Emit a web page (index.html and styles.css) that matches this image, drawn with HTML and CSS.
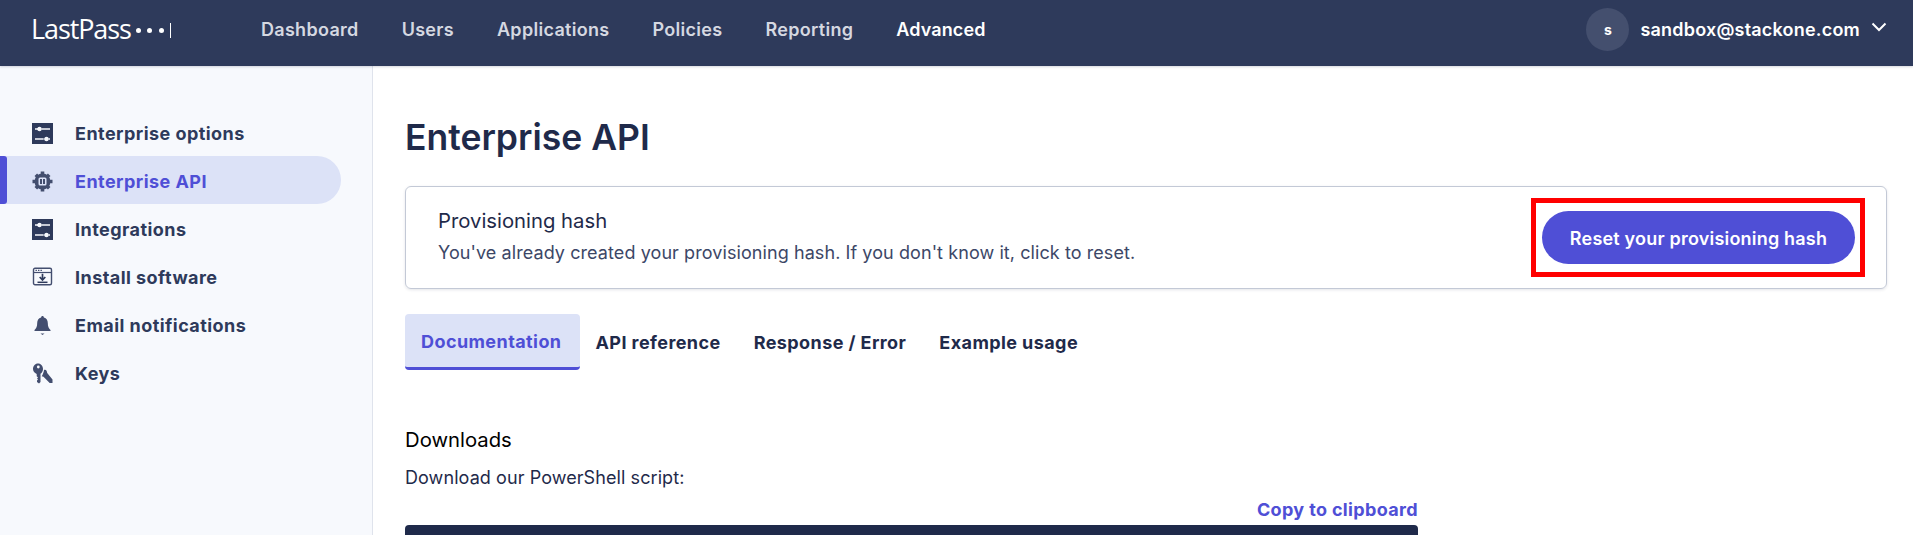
FILE: index.html
```html
<!DOCTYPE html>
<html lang="en">
<head>
<meta charset="utf-8">
<title>Enterprise API - LastPass</title>
<link rel="stylesheet" href="styles.css">
</head>
<body>
<header class="topbar">
  <div class="logo">
    <span class="logo-text">LastPass</span>
    <span class="logo-dot"></span><span class="logo-dot"></span><span class="logo-dot"></span>
    <span class="logo-bar"></span>
  </div>
  <nav class="topnav">
    <a>Dashboard</a><a>Users</a><a>Applications</a><a>Policies</a><a>Reporting</a><a class="current">Advanced</a>
  </nav>
  <div class="account">
    <span class="avatar">s</span>
    <span class="email">sandbox@stackone.com</span>
    <svg class="chevron" viewBox="0 0 16 10" width="16" height="10"><path d="M1.5 1.5 8 8l6.500-6.500" fill="none" stroke="#fff" stroke-width="2"/></svg>
  </div>
</header>
<div class="layout">
  <aside class="sidebar">
    <a class="side-item">
      <svg class="side-icon" viewBox="0 0 21 21"><rect width="21" height="21" fill="#2e3a5b"/><path d="M3 6h3M10 6h8M3 16h8M17 16h1" stroke="#f7f9fd" stroke-width="1.400"/><path d="M5 6h5M11 16h6" stroke="#f7f9fd" stroke-width="1"/><circle cx="7.500" cy="6" r="2.200" fill="#f7f9fd"/><circle cx="14.500" cy="16" r="2.200" fill="#f7f9fd"/></svg>
      Enterprise options
    </a>
    <a class="side-item active">
      <svg class="side-icon" viewBox="0 0 21 21"><circle cx="10.500" cy="10.500" r="8" fill="#434e6f"/><path d="M10.500 .5v20M.5 10.500h20M3.800 3.800l13.400 13.400M17.200 3.800 3.800 17.200" stroke="#434e6f" stroke-width="3.600"/><rect x="6.500" y="6.500" width="8" height="8" rx="1.500" fill="#dce2f7"/><rect x="8" y="8" width="2" height="5" fill="#434e6f"/><rect x="11" y="8" width="2" height="5" fill="#434e6f"/></svg>
      Enterprise API
    </a>
    <a class="side-item">
      <svg class="side-icon" viewBox="0 0 21 21"><rect width="21" height="21" fill="#2e3a5b"/><path d="M3 6h3M10 6h8M3 16h8M17 16h1" stroke="#f7f9fd" stroke-width="1.400"/><path d="M5 6h5M11 16h6" stroke="#f7f9fd" stroke-width="1"/><circle cx="7.500" cy="6" r="2.200" fill="#f7f9fd"/><circle cx="14.500" cy="16" r="2.200" fill="#f7f9fd"/></svg>
      Integrations
    </a>
    <a class="side-item">
      <svg class="side-icon" viewBox="0 0 21 21"><rect x="1.500" y="1.200" width="18" height="16.600" rx="1.500" fill="none" stroke="#434e6f" stroke-width="1.400"/><path d="M2 5.500h17" stroke="#434e6f" stroke-width="1.200"/><path d="M3.500 3.400h1.400M6 3.400h1.400M8.500 3.400h1.400" stroke="#434e6f" stroke-width="1.200"/><path d="M10.500 6.800v5.800M7.700 10l2.800 3 2.800-3" fill="none" stroke="#2e3a5b" stroke-width="1.700"/><path d="M5.500 15.300h10" stroke="#2e3a5b" stroke-width="1.500"/></svg>
      Install software
    </a>
    <a class="side-item">
      <svg class="side-icon" viewBox="0 0 21 21"><path d="M10.500 1c.9 0 1.300.6 1.400 1.500 2.700.6 3.900 2.900 3.900 5.500 0 3.600 1 5.400 2.700 7v1H2.500v-1c1.700-1.600 2.700-3.400 2.700-7 0-2.600 1.200-4.900 3.900-5.500C9.200 1.600 9.600 1 10.500 1Z" fill="#434e6f"/><path d="M8.500 18.600h4l-2 1.400Z" fill="#434e6f"/></svg>
      Email notifications
    </a>
    <a class="side-item">
      <svg class="side-icon" viewBox="0 0 21 21"><path d="M6 .5c3 0 5 2.500 5 5.500 0 2.200-1 3.800-2.500 4.800V19L7 20.500 5 19v-1.500l1-1-1-1 1-1-1.300-1.200V11C2.500 10 1 8.200 1 6 1 3 3 .5 6 .5Z" fill="#434e6f"/><circle cx="6.300" cy="4" r="1.400" fill="#f7f9fd"/><path d="M12 7c1.300-.4 2.200.1 2.700 1l.5 2 5.300 6.500V20h-2.800l-6.200-6.300-1.800-.5c1.100-1.600 2-3.900 2.300-6.200Z" fill="#434e6f"/></svg>
      Keys
    </a>
  </aside>
  <main class="content">
    <h1 class="title">Enterprise API</h1>
    <section class="card">
      <div class="card-text">
        <h2 class="card-title">Provisioning hash</h2>
        <p class="card-desc">You've already created your provisioning hash. If you don't know it, click to reset.</p>
      </div>
      <div class="highlight">
        <button class="primary">Reset your provisioning hash</button>
      </div>
    </section>
    <div class="tabs">
      <a class="tab selected">Documentation</a><a class="tab">API reference</a><a class="tab">Response / Error</a><a class="tab">Example usage</a>
    </div>
    <section class="docs">
      <h3 class="docs-title">Downloads</h3>
      <p class="docs-text">Download our PowerShell script:</p>
      <div class="copy-row"><a class="copy">Copy to clipboard</a></div>
      <div class="code"></div>
    </section>
  </main>
</div>
</body>
</html>
```
FILE: styles.css
```css
* { box-sizing: border-box; }
html, body { margin: 0; height: 100%; overflow: hidden; }
body { font-family: Inter, "Liberation Sans", sans-serif; background: #fff; color: #1f2a4a; height: 535px; display: flex; flex-direction: column; }

.topbar { height: 66px; flex: none; background: #2e3a5b; display: flex; align-items: center; padding: 0 26px 8px 32px; box-shadow: 0 1px 2px rgba(30,40,70,.18); position: relative; }
.logo { width: 229px; display: flex; align-items: center; color: #fff; }
.logo-text { font-family: "Open Sans", sans-serif; font-weight: 400; font-size: 27px; line-height: 30px; letter-spacing: -1.1px; width: 104.500px; margin-left: -1px; flex: none; }
.logo-dot { width: 5px; height: 5px; border-radius: 50%; background: #fff; margin: 3px 6.500px 0 0; }
.logo-bar { width: 1px; height: 15px; background: #fff; margin: 3px 0 0 0; }
.topnav { display: flex; gap: 43px; font-size: 18px; font-weight: 600; letter-spacing: .3px; color: #d5d8e1; }
.topnav .current { color: #fff; letter-spacing: .1px; }
.account { margin-left: auto; display: flex; align-items: center; color: #fff; }
.avatar { width: 43px; height: 43px; border-radius: 50%; background: #444f6e; display: flex; align-items: center; justify-content: center; font-size: 14px; font-weight: 700; margin-right: 11px; }
.email { font-size: 18px; font-weight: 600; letter-spacing: .2px; margin-right: 11px; }
.chevron { display: block; margin-top: -4px; }

.layout { flex: 1; display: flex; min-height: 0; }
.sidebar { width: 373px; flex: none; background: #f7f9fd; border-right: 1px solid #dfe3ec; padding-top: 42px; }
.side-item { display: flex; align-items: center; height: 48px; width: 341px; padding: 2px 0 0 32px; font-size: 18px; font-weight: 700; letter-spacing: .45px; color: #2e3a5b; border-radius: 0 24px 24px 0; position: relative; }
.side-icon { width: 21px; height: 21px; flex: none; margin-right: 22px; }
.side-item.active { background: #dce2f7; color: #4f4fd6; }
.side-item.active::before { content: ""; position: absolute; left: 0; top: 0; bottom: 0; width: 7px; background: #4f4fd6; border-radius: 0 3px 3px 0; }

.content { flex: 1; padding: 0 26px 0 32px; min-width: 0; }
.title { margin: 50px 0 0; font-size: 35.500px; line-height: 44px; font-weight: 600; color: #1f2a4a; }
.card { margin-top: 26px; height: 103px; border: 1px solid #c3c9d6; border-radius: 6px; box-shadow: 0 1px 3px rgba(30,40,70,.12); display: flex; align-items: center; justify-content: space-between; padding: 0 21px 0 32px; }
.card-text { padding-bottom: 2px; }
.card-title { margin: 0; font-size: 20.300px; line-height: 24px; font-weight: 400; color: #1f2a4a; }
.card-desc { margin: 8px 0 0; font-size: 18px; line-height: 24px; letter-spacing: .08px; color: #3c4767; }
.highlight { border: 5px solid #f00; padding: 8px 5px 8px 6px; }
.primary { display: block; width: 313px; height: 53px; border: 0; border-radius: 27px; background: #4f4fd6; color: #fff; font: 600 18px Inter, sans-serif; letter-spacing: .2px; padding: 2px 0 0; }

.tabs { margin-top: 25px; display: flex; }
.tab { height: 56px; padding: 0 17px 0 16px; display: flex; align-items: center; font-size: 18px; font-weight: 700; letter-spacing: .42px; color: #1f2a4a; border-radius: 4px; }
.tab.selected { background: #dce2f7; color: #4f4fd6; border-bottom: 3px solid #4f4fd6; padding-top: 2px; padding-right: 18px; }

.docs { width: 1013px; }
.docs-title { margin: 58px 0 0; font-size: 20.300px; line-height: 24px; font-weight: 400; color: #000; }
.docs-text { margin: 14px 0 0; font-size: 18px; line-height: 24px; letter-spacing: .08px; color: #1f2a4a; }
.copy-row { margin-top: 8px; display: flex; justify-content: flex-end; }
.copy { font-size: 18px; line-height: 24px; font-weight: 700; letter-spacing: .35px; color: #4f4fd6; }
.code { margin-top: 3px; height: 200px; background: #1f2a4a; border-radius: 4px; }
```
